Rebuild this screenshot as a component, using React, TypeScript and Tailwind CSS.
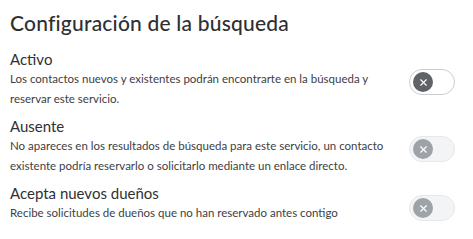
import { X } from 'lucide-react';

interface Setting {
  id: string;
  label: string;
  description: string;
  disabled: boolean;
}

const settings: Setting[] = [
  {
    id: 'activo',
    label: 'Activo',
    description: 'Los contactos nuevos y existentes podrán encontrarte en la búsqueda y reservar este servicio.',
    disabled: false,
  },
  {
    id: 'ausente',
    label: 'Ausente',
    description:
      'No apareces en los resultados de búsqueda para este servicio, un contacto existente podría reservarlo o solicitarlo mediante un enlace directo.',
    disabled: true,
  },
  {
    id: 'nuevos',
    label: 'Acepta nuevos dueños',
    description: 'Recibe solicitudes de dueños que no han reservado antes contigo',
    disabled: true,
  },
];

function Toggle({ disabled }: { disabled: boolean }) {
  return (
    <div
      className={`flex items-center w-[46px] h-[26px] rounded-full border px-[3px] shrink-0 ${
        disabled ? 'bg-[#f3f4f6] border-[#e6e8eb]' : 'bg-white border-[#c9cdd2]'
      }`}
    >
      <span
        className={`flex items-center justify-center w-[20px] h-[20px] rounded-full ${
          disabled ? 'bg-[#9ea3a9]' : 'bg-[#5f6368]'
        }`}
      >
        <X className="w-[11px] h-[11px] text-white" strokeWidth={2.5} />
      </span>
    </div>
  );
}

export default function App() {
  return (
    <div className="w-[473px] h-[239px] bg-white px-[10px] pt-[9px] font-['Lato',sans-serif] text-[#2e3033]">
      <h1 className="text-[21px] leading-[28px] font-medium tracking-[0.2px]">Configuración de la búsqueda</h1>

      <div className="mt-[12px] flex flex-col gap-[7px]">
        {settings.map(s => (
          <div key={s.id} className="flex items-center justify-between pr-[8px]">
            <div className="w-[380px]">
              <p className="text-[15px] leading-[20px]">{s.label}</p>
              <p className="text-[11.5px] leading-[20px] text-[#3d4045]">{s.description}</p>
            </div>
            <div className={s.id === 'nuevos' ? 'mt-[10px]' : 'mt-[6px]'}>
              <Toggle disabled={s.disabled} />
            </div>
          </div>
        ))}
      </div>
    </div>
  );
}
